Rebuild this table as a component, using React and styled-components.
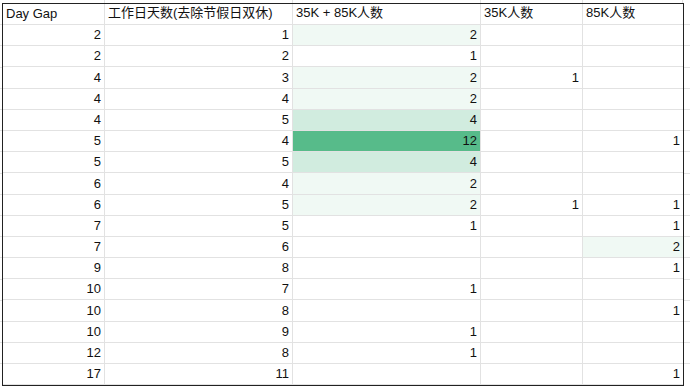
import React from 'react';
import styled, { createGlobalStyle } from 'styled-components';

const GlobalStyle = createGlobalStyle`
  html, body {
    margin: 0;
    padding: 0;
    background: #fff;
  }
  body {
    width: 690px;
    height: 387px;
    overflow: hidden;
    font-family: "Liberation Sans", Arial, "Noto Sans CJK SC", sans-serif;
    background-image: repeating-linear-gradient(
      to bottom,
      transparent 0,
      transparent 20.2px,
      #e2e2e2 20.2px,
      #e2e2e2 21.2px
    );
    background-position: 0 3.8px;
    background-size: 100% 381px;
    background-repeat: no-repeat;
  }
`;

const COLS = '102px 188px 188px 102px 100px';

const Sheet = styled.div`
  padding-left: 2px;
`;

const GhostRow = styled.div`
  display: grid;
  grid-template-columns: ${COLS};
  height: 3px;
  margin-left: 1px;
  background: #fff;
`;

const Ghost = styled.div`
  border-right: 1px solid #e2e2e2;
`;

const Frame = styled.div`
  display: grid;
  grid-template-columns: ${COLS};
  grid-template-rows: 21px repeat(17, 21.2px);
  width: 680px;
  border: 1px solid #222;
  background: #fff;
`;

const Cell = styled.div`
  display: flex;
  align-items: flex-end;
  justify-content: ${(p) => (p.$head ? 'flex-start' : 'flex-end')};
  padding: 0 3px 3px;
  border-right: ${(p) => (p.$last ? 'none' : '1px solid #e2e2e2')};
  border-bottom: 1px solid #e2e2e2;
  background: ${(p) => p.$bg || '#fff'};
  font-size: 13px;
  color: #111;
  white-space: nowrap;
  overflow: hidden;
`;

const headers = ['Day Gap', '工作日天数(去除节假日双休)', '35K + 85K人数', '35K人数', '85K人数'];

const rows = [
  [2, 1, 2, null, null],
  [2, 2, 1, null, null],
  [4, 3, 2, 1, null],
  [4, 4, 2, null, null],
  [4, 5, 4, null, null],
  [5, 4, 12, null, 1],
  [5, 5, 4, null, null],
  [6, 4, 2, null, null],
  [6, 5, 2, 1, 1],
  [7, 5, 1, null, 1],
  [7, 6, null, null, 2],
  [9, 8, null, null, 1],
  [10, 7, 1, null, null],
  [10, 8, null, null, 1],
  [10, 9, 1, null, null],
  [12, 8, 1, null, null],
  [17, 11, null, null, 1],
];

// white -> #57bb8a over 1..12
function scale(v) {
  if (v == null || v <= 1) return null;
  const t = (v - 1) / 11;
  const mix = (a, b) => Math.round(255 - t * (255 - b));
  return `rgb(${mix(255, 87)}, ${mix(255, 187)}, ${mix(255, 138)})`;
}

export default function App() {
  return (
    <>
      <GlobalStyle />
      <Sheet>
        <GhostRow>
          {headers.map((h) => (
            <Ghost key={h} />
          ))}
        </GhostRow>
        <Frame>
          {headers.map((h, i) => (
            <Cell key={h} $head $last={i === 4}>
              {h}
            </Cell>
          ))}
          {rows.map((r, ri) =>
            r.map((v, ci) => (
              <Cell
                key={`${ri}-${ci}`}
                $last={ci === 4}
                $bg={ci === 2 || ci === 4 ? scale(v) : null}
              >
                {v ?? ''}
              </Cell>
            ))
          )}
        </Frame>
      </Sheet>
    </>
  );
}
